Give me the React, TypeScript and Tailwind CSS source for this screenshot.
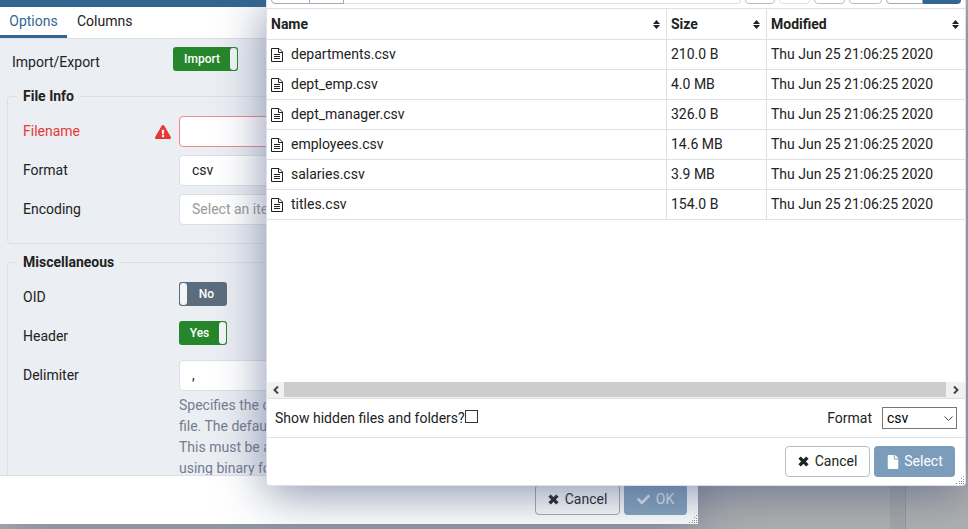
import type { ReactNode } from "react";
import { FaCheck, FaExclamationTriangle, FaFile } from "react-icons/fa";

const MODIFIED = "Thu Jun 25 21:06:25 2020";

const FILES = [
  { name: "departments.csv", size: "210.0 B" },
  { name: "dept_emp.csv", size: "4.0 MB" },
  { name: "dept_manager.csv", size: "326.0 B" },
  { name: "employees.csv", size: "14.6 MB" },
  { name: "salaries.csv", size: "3.9 MB" },
  { name: "titles.csv", size: "154.0 B" },
];

function SortIcon() {
  return (
    <svg width="7" height="9" viewBox="0 0 7 9" fill="#222" aria-hidden="true">
      <path d="M3.5 0 L7 4 H0 Z M0 5 H7 L3.5 9 Z" />
    </svg>
  );
}

function CloseIcon() {
  return (
    <svg width="11" height="11" viewBox="0 0 11 11" stroke="currentColor" strokeWidth="3.4" aria-hidden="true">
      <path d="M1.6 1.6 L9.4 9.4 M9.4 1.6 L1.6 9.4" />
    </svg>
  );
}

function FileIcon() {
  return (
    <svg width="12" height="14" viewBox="0 0 12 14" fill="none" stroke="#222" aria-hidden="true">
      <path d="M0.5 0.5 H8 L11.5 4 V13.5 H0.5 Z" />
      <path d="M7.5 0.5 V4.5 H11.5 M3 6.5 H9 M3 8.5 H9 M3 10.5 H9" />
    </svg>
  );
}

function ResizeGrip() {
  return (
    <svg
      className="absolute right-0 bottom-0"
      width="9"
      height="9"
      viewBox="0 0 9 9"
      fill="#8f949c"
      aria-hidden="true"
    >
      <path d="M7 0h1v1h-1z M5 2h1v1h-1z M7 3h1v1h-1z M3 5h1v1h-1z M5 5h1v1h-1z M7 5h1v1h-1z M0 7h1v1h-1z M3 7h1v1h-1z M5 7h1v1h-1z M7 7h1v1h-1z" />
    </svg>
  );
}

function Toggle({ label, text, on, wide }: { label: string; text: string; on: boolean; wide?: boolean }) {
  return (
    <button
      type="button"
      role="switch"
      aria-checked={on}
      aria-label={label}
      className={`flex h-6 items-center rounded-[3px] p-px text-xs font-medium text-white ${
        wide ? "w-[65px]" : "w-12"
      } ${on ? "bg-[#26862b]" : "flex-row-reverse bg-[#5b6d7c]"}`}
    >
      <span className="flex-1 pb-px text-center leading-5">{text}</span>
      <span className="h-full w-[7px] rounded-[3px] bg-[#f4f5f8]" />
    </button>
  );
}

function Group({ title, children }: { title: string; children: ReactNode }) {
  return (
    <fieldset className="mx-[7px] rounded border border-[#dbdfe6] pr-4 pb-[10px] pl-[15px]">
      <legend className="-ml-[6px] px-[6px] text-sm leading-[21px] font-bold">{title}</legend>
      {children}
    </fieldset>
  );
}

function Field({ label, htmlFor, error, children }: { label: string; htmlFor?: string; error?: boolean; children: ReactNode }) {
  return (
    <div className="flex min-h-[39px] items-start">
      <div className={`flex w-[156px] shrink-0 items-center justify-between pt-[5px] pr-2 ${error ? "text-[#e53935]" : ""}`}>
        <label htmlFor={htmlFor}>{label}</label>
        {error && <FaExclamationTriangle size={16} />}
      </div>
      <div className="min-w-0 flex-1">{children}</div>
    </div>
  );
}

const INPUT = "h-[31px] w-full rounded border bg-white px-3 pb-[2px] text-sm placeholder:text-[#999] outline-none";

function ImportDialog() {
  return (
    <section className="absolute top-0 bottom-[5px] left-0 flex w-[698px] flex-col bg-white shadow-[0_8px_48px_#4a588080]">
      <div className="h-[7px] shrink-0 bg-[#326690]" />
      <nav className="flex h-8 shrink-0 border-b border-[#dbdfe6]" role="tablist">
        <button type="button" role="tab" aria-selected="true" className="w-[67px] border-b-[3px] border-[#326690] text-[#326690]">
          Options
        </button>
        <button type="button" role="tab" aria-selected="false" className="border-b-[3px] border-transparent px-[10px]">
          Columns
        </button>
      </nav>
      <div className="min-h-0 flex-1 overflow-hidden bg-[#ebeef3]">
        <div className="flex h-[47px] items-start pt-2 pl-3">
          <span className="w-[161px] pt-[5px]">Import/Export</span>
          <Toggle label="Import/Export" text="Import" on wide />
        </div>
        <Group title="File Info">
          <div className="pt-[9px]">
            <Field label="Filename" htmlFor="filename" error>
              <input id="filename" className={`${INPUT} border-[#f2868b]`} />
            </Field>
            <Field label="Format" htmlFor="format">
              <input id="format" defaultValue="csv" className={`${INPUT} border-[#dbdfe6]`} />
            </Field>
            <Field label="Encoding" htmlFor="encoding">
              <input id="encoding" placeholder="Select an item..." className={`${INPUT} border-[#dbdfe6]`} />
            </Field>
          </div>
        </Group>
        <div className="h-2" />
        <Group title="Miscellaneous">
          <div className="pt-[9px]">
            <Field label="OID">
              <Toggle label="OID" text="No" on={false} />
            </Field>
            <Field label="Header">
              <Toggle label="Header" text="Yes" on />
            </Field>
            <Field label="Delimiter" htmlFor="delimiter">
              <input id="delimiter" defaultValue="," className={`${INPUT} border-[#dbdfe6]`} />
              <p className="mt-1 leading-[21px] text-[#747c90]">
                Specifies the character that separates columns within each row (line) of the
                <br />
                file. The default is a tab character in text format, a comma in CSV format.
                <br />
                This must be a single one-byte character. This option is not allowed when
                <br />
                using binary format.
              </p>
            </Field>
          </div>
        </Group>
      </div>
      <footer className="flex h-[49px] shrink-0 items-start justify-end gap-1 border-t border-[#dbdfe6] pt-2 pr-[11px]">
        <button type="button" className="flex h-[31px] w-[85px] items-center justify-center gap-[6px] rounded border border-[#a4a9b8]">
          <CloseIcon />
          Cancel
        </button>
        <button type="button" disabled className="flex h-[31px] w-[63px] items-center justify-center gap-[6px] rounded bg-[#84a3be] text-[#e4eaf2]">
          <FaCheck size={13} />
          OK
        </button>
      </footer>
      <ResizeGrip />
    </section>
  );
}

function HeaderCell({ title, className }: { title: string; className: string }) {
  return (
    <th scope="col" className={`h-[31px] border-b border-[#dde0e6] px-1 text-left font-bold ${className}`}>
      <span className="flex items-center justify-between pr-[2px]">
        {title}
        <SortIcon />
      </span>
    </th>
  );
}

function Toolbar() {
  const button = "h-[30px] rounded border border-[#b9bdc9]";
  return (
    <div className="flex h-2 shrink-0 items-end gap-1 overflow-hidden pr-1 pb-1 pl-1">
      <div className="flex flex-1">
        <button type="button" aria-label="Home" className="h-[30px] w-[39px] rounded-l border border-[#a4a9b8]" />
        <button type="button" aria-label="Up" className="h-[30px] w-[34px] border-y border-r border-[#a4a9b8]" />
        <input aria-label="Path" className="h-[30px] min-w-0 flex-1 rounded-r border-y border-r border-[#dde0e6]" />
      </div>
      <button type="button" aria-label="Refresh" className={`${button} w-[30px]`} />
      <button type="button" aria-label="Download" className="h-[30px] w-[31px] rounded border border-[#dde0e6]" />
      <button type="button" aria-label="Delete" className={`${button} w-[31px]`} />
      <button type="button" aria-label="Rename" className={`${button} w-[33px]`} />
      <div className="flex">
        <button type="button" aria-label="Grid view" className="h-[30px] w-[37px] rounded-l border border-[#a4a9b8]" />
        <button type="button" aria-label="Table view" className="h-[30px] w-[38px] rounded-r bg-[#326690]" />
      </div>
    </div>
  );
}

function FileDialog() {
  return (
    <section className="absolute top-0 right-[2px] bottom-[43px] left-[266px] flex flex-col rounded-b border-x border-b border-[#dde0e6] bg-white shadow-[0_8px_48px_#4a5880a6]">
      <Toolbar />
      <div className="min-h-0 flex-1 overflow-hidden border-t border-[#dde0e6]">
        <table className="w-full table-fixed border-separate border-spacing-0">
          <thead>
            <tr>
              <HeaderCell title="Name" className="" />
              <HeaderCell title="Size" className="w-[100px] border-l" />
              <HeaderCell title="Modified" className="w-[199px] border-l" />
            </tr>
          </thead>
          <tbody>
            {FILES.map((file) => (
              <tr key={file.name}>
                <td className="h-[30px] border-b border-[#dde0e6] px-1">
                  <span className="flex items-center gap-2">
                    <FileIcon />
                    {file.name}
                  </span>
                </td>
                <td className="h-[30px] border-b border-l border-[#dde0e6] px-1">{file.size}</td>
                <td className="h-[30px] border-b border-l border-[#dde0e6] px-1">{MODIFIED}</td>
              </tr>
            ))}
          </tbody>
        </table>
      </div>
      <div className="flex h-4 shrink-0 bg-[#f1f1f1]">
        <button type="button" aria-label="Scroll left" className="flex w-[17px] items-center justify-center">
          <svg width="6" height="8" viewBox="0 0 6 8" fill="none" stroke="#444" strokeWidth="2" aria-hidden="true">
            <path d="M5 0.5 L1.5 4 L5 7.5" />
          </svg>
        </button>
        <div className="h-[15px] flex-1 bg-[#cdcdcd]" />
        <button type="button" aria-label="Scroll right" className="flex w-[19px] items-center justify-center">
          <svg width="6" height="8" viewBox="0 0 6 8" fill="none" stroke="#444" strokeWidth="2" aria-hidden="true">
            <path d="M1 0.5 L4.5 4 L1 7.5" />
          </svg>
        </button>
      </div>
      <div className="flex h-[39px] shrink-0 items-center justify-between border-t border-[#dde0e6] px-2">
        <div className="flex items-center">
          <label htmlFor="hidden-files">Show hidden files and folders?</label>
          <input id="hidden-files" type="checkbox" className="mb-1 size-[13px] appearance-none border border-[#333] bg-white" />
        </div>
        <div className="flex items-center gap-[10px]">
          <label htmlFor="file-format">Format</label>
          <div className="relative">
            <select id="file-format" className="block h-[22px] w-[75px] appearance-none border border-[#767676] bg-white px-1 text-black">
              <option>csv</option>
              <option>All Files</option>
            </select>
            <svg className="pointer-events-none absolute top-[9px] right-1" width="9" height="6" viewBox="0 0 9 6" fill="none" stroke="#444" aria-hidden="true">
              <path d="M0.5 0.5 L4.5 4.5 L8.5 0.5" />
            </svg>
          </div>
        </div>
      </div>
      <footer className="flex h-12 shrink-0 items-start justify-end gap-1 border-t border-[#dde0e6] pt-2 pr-[10px]">
        <button type="button" className="flex h-[31px] w-[85px] items-center justify-center gap-[6px] rounded border border-[#b9bdcb]">
          <CloseIcon />
          Cancel
        </button>
        <button type="button" disabled className="flex h-[31px] w-[81px] items-center justify-center gap-1 rounded bg-[#7b9cba] text-white">
          <FaFile size={14} />
          Select
        </button>
      </footer>
      <ResizeGrip />
    </section>
  );
}

export default function App() {
  return (
    <main className="relative h-screen min-h-[400px] overflow-hidden bg-[#b0b0b0] font-[Roboto,sans-serif] text-sm leading-[21px] text-[#222]">
      <div className="flex h-full justify-end">
        <div className="w-4 border-r border-[#999] bg-[#a5a6a8]" />
        <div className="w-[62px]" />
      </div>
      <ImportDialog />
      <FileDialog />
    </main>
  );
}
